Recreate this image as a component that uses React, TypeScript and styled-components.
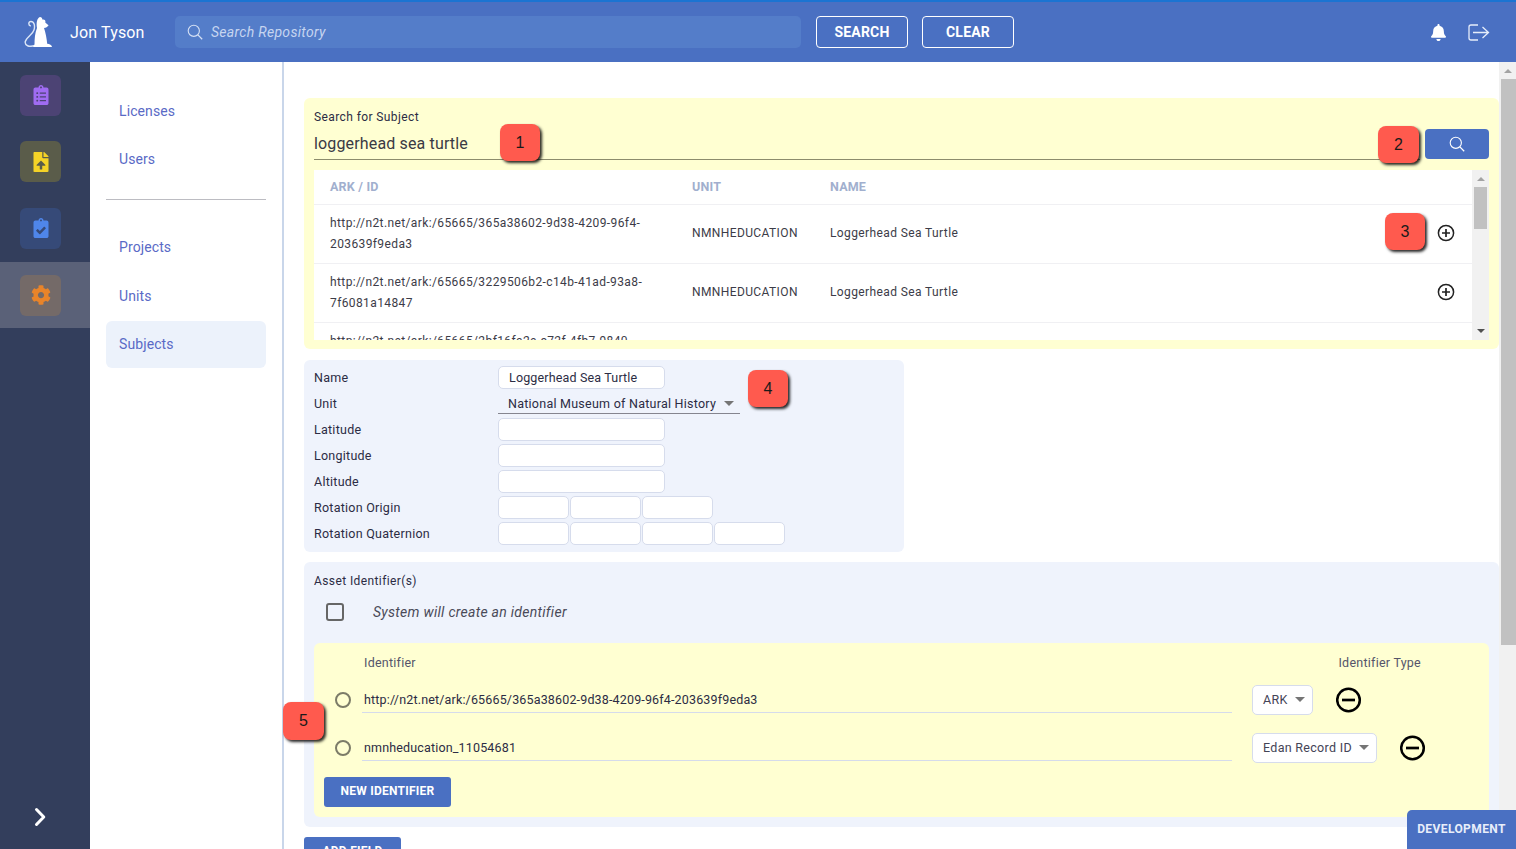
import React from 'react';
import styled, { createGlobalStyle } from 'styled-components';
import { FaClipboardList, FaFileUpload, FaClipboardCheck, FaCog, FaBell } from 'react-icons/fa';

const Global = createGlobalStyle`
  html, body { margin: 0; padding: 0; height: 100%; overflow: hidden; background: #fff; }
  * { box-sizing: border-box; }
  body { font-family: Roboto, "Liberation Sans", sans-serif; color: #2c2c44; }
`;

const Root = styled.div`position: relative; width: 1516px; height: 849px; overflow: hidden; display: flex; flex-direction: column;`;
const Header = styled.header`
  height: 62px; flex: none; display: flex; align-items: center; background: #4a70c2; border-top: 2px solid #1b74d2;
  padding: 0 26px 0 24px;
`;
const Logo = styled.svg`width: 28px; height: 30px; flex: none;`;
const UserName = styled.div`color: #fff; font-size: 16px; margin-left: 18px; width: 105px; letter-spacing: 0.15px;`;
const SearchBar = styled.div`
  width: 626px; height: 32px; background: #547dc9; border-radius: 5px; display: flex; align-items: center; padding-left: 12px; gap: 8px;
  color: #c6d5f0; font-size: 14px; font-style: italic; letter-spacing: 0.3px;
`;
const HeaderButton = styled.button<{ $w: number; $ml: number }>`
  width: ${p => p.$w}px; margin-left: ${p => p.$ml}px; height: 32px; background: transparent; border: 1px solid #fff; border-radius: 4px;
  color: #fff; font: 700 14px Roboto, sans-serif; padding: 0; letter-spacing: 0.2px;
`;
const HeaderIcons = styled.div`margin-left: auto; display: flex; align-items: center; gap: 21px;`;

const Body = styled.div`flex: 1; display: flex; min-height: 0;`;
const Sidebar = styled.aside`width: 90px; flex: none; background: #333e5c; display: flex; flex-direction: column;`;
const SideRow = styled.div<{ $active?: boolean }>`
  height: 66.5px; display: flex; align-items: center; padding-left: 20px; padding-top: ${p => (p.$active ? '1px' : '0')};
  background: ${p => (p.$active ? '#5a6178' : 'transparent')};
`;
const Tile = styled.div<{ $bg: string; $fg: string }>`
  width: 41px; height: 41px; border-radius: 6px; background: ${p => p.$bg}; color: ${p => p.$fg}; display: flex; align-items: center; justify-content: center; font-size: 20px;
`;
const Expand = styled.div`margin-top: auto; height: 64px; display: flex; align-items: flex-start; padding: 22px 0 0 34px;`;

const Nav = styled.nav`
  width: 194px; flex: none; border-right: 2px solid #c9d6ea; padding: 25px 16px 0; display: flex; flex-direction: column;
`;
const NavGroup = styled.div<{ $gap: number }>`display: flex; flex-direction: column; gap: ${p => p.$gap}px;`;
const NavItem = styled.div<{ $active?: boolean }>`
  height: 47px; display: flex; align-items: center; padding-left: 13px; padding-bottom: ${p => (p.$active ? '1px' : '0')}; border-radius: 6px; color: #5a6ac6; font-size: 14px; letter-spacing: 0.1px;
  background: ${p => (p.$active ? '#ecf2fb' : 'transparent')};
`;
const NavDivider = styled.hr`width: 100%; margin: 17px 0 23px; border: 0; border-top: 1px solid #bcbcc2;`;

const Main = styled.main`flex: 1; display: flex; min-width: 0;`;
const Scroll = styled.div`flex: 1; min-width: 0; overflow: hidden; padding: 36px 0 0 20px; display: flex; flex-direction: column; gap: 10px;`;

const Yellow = styled.section`background: #ffffd2; border-radius: 6px; flex: none;`;
const SearchPanel = styled(Yellow)`height: 251px; padding: 11px 10px 9px; margin-bottom: 1px; display: flex; flex-direction: column;`;
const SearchLabel = styled.div`font-size: 12px; line-height: 16px; letter-spacing: 0.4px;`;
const SearchLine = styled.div`display: flex; align-items: flex-end; gap: 5px; margin-top: 3px; height: 32px;`;
const SearchValue = styled.div`
  flex: 1; height: 32px; border-bottom: 1px solid #8c8c6c; font-size: 16px; line-height: 32px; letter-spacing: 0.15px; color: #3a3a44;
`;
const SearchGo = styled.button`width: 64px; height: 30px; margin-bottom: 1px; background: #4a70c2; border: 0; border-radius: 4px; display: flex; align-items: center; justify-content: center; padding: 0;`;

const TableBox = styled.div`margin-top: 10px; height: 170px; background: #fff; display: flex; overflow: hidden;`;
const TableInner = styled.div`flex: 1; min-width: 0; overflow: hidden;`;
const Row = styled.div<{ $h: number }>`
  display: grid; grid-template-columns: 362px 138px 1fr 100px; height: ${p => p.$h}px; border-bottom: 1px solid #f0f0f3; align-items: center;
  font-size: 12px; letter-spacing: 0.39px; color: #3c3c48;
`;
const HeadCell = styled.div`padding-left: 16px; margin-top: -2px; color: #a1afce; font-weight: 700; font-size: 12.5px; letter-spacing: 0.2px;`;
const Cell = styled.div`padding-left: 16px; line-height: 21px;`;
const MetaCell = styled(Cell)`margin-top: -2px;`;
const ActionCell = styled.div`display: flex; padding-left: 65px; margin-top: -2px;`;
const ClippedRow = styled.div`padding: 8px 16px 0; width: 362px; font-size: 12px; line-height: 21px; letter-spacing: 0.39px; color: #3c3c48;`;

const Track = styled.div`
  width: 17px; flex: none; background: #f1f1f1; display: flex; flex-direction: column; align-items: center; height: 100%;
`;
const Arrow = styled.div<{ $dir: 'up' | 'down'; $dark?: boolean; $mt?: string }>`
  width: 0; height: 0; flex: none; border-left: 4px solid transparent; border-right: 4px solid transparent;
  ${p => (p.$dir === 'up' ? `border-bottom: 4px solid ${p.$dark ? '#505050' : '#a3a3a3'};` : `border-top: 4px solid ${p.$dark ? '#505050' : '#a3a3a3'};`)}
  margin-top: ${p => p.$mt || '0'};
`;
const Thumb = styled.div<{ $h: number; $mt: number; $w: number; $ml?: number }>`
  width: ${p => p.$w}px; height: ${p => p.$h}px; margin-top: ${p => p.$mt}px; margin-left: ${p => p.$ml || 0}px; background: #c1c1c1; flex: none;
`;

const Pale = styled.section`background: #eff3fc; border-radius: 6px; flex: none;`;
const FormPanel = styled(Pale)`
  width: 600px; padding: 6px 10px 8px; display: grid; grid-template-columns: 184px 1fr; grid-auto-rows: 22px; row-gap: 4px; align-items: center;
  font-size: 12.5px; letter-spacing: 0.25px;
`;
const FieldRow = styled.div`display: flex; gap: 1px;`;
const Field = styled.div<{ $w: number }>`
  width: ${p => p.$w}px; height: 23px; background: #fff; border: 1px solid #d6dcec; border-radius: 5px; padding-left: 10px; line-height: 21px; font-size: 12.5px; letter-spacing: 0.16px; color: #2c2c44;
`;
const UnitSelect = styled.div`
  width: 242px; height: 20px; margin-top: 2px; border-bottom: 1px solid #85858f; display: flex; align-items: center; justify-content: space-between; padding: 0 6px 0 10px;
`;
const Caret = styled.span`width: 0; height: 0; flex: none; border-left: 5px solid transparent; border-right: 5px solid transparent; border-top: 5px solid #757575;`;

const AssetPanel = styled(Pale)`height: 265px; padding: 11px 10px 10px; display: flex; flex-direction: column;`;
const AssetLabel = styled.div`font-size: 12px; line-height: 16px; letter-spacing: 0.4px;`;
const CheckRow = styled.div`display: flex; align-items: center; margin: 14px 0 0 12px; height: 18px; font-size: 14px; font-style: italic; color: #4a4a58; letter-spacing: 0.28px;`;
const CheckBox = styled.span`width: 18px; height: 18px; border: 2px solid #666; border-radius: 3px; margin-right: 29px; flex: none;`;
const IdBox = styled(Yellow)`margin-top: 22px; height: 174px; padding: 0 10px; display: flex; flex-direction: column;`;
const IdHead = styled.div`
  display: flex; justify-content: space-between; height: 38px; margin-bottom: 3px; align-items: center; padding: 0 58px 0 40px; font-size: 12.5px; letter-spacing: 0.25px; color: #55556a;
`;
const IdRow = styled.div`display: flex; align-items: center; height: 32px; margin-bottom: 16px; font-size: 12.5px; letter-spacing: 0.3px;`;
const Radio = styled.span`width: 16px; height: 16px; border: 2px solid #7c7c68; border-radius: 50%; margin: 0 11px 0 11px; flex: none;`;
const IdInput = styled.div`
  width: 870px; height: 28px; margin-top: -3px; border-bottom: 1px solid #d5dbeb; padding-left: 2px; line-height: 30px; letter-spacing: 0.16px; color: #2c2c44; flex: none; white-space: nowrap;
`;
const TypeSelect = styled.div<{ $w: number }>`
  width: ${p => p.$w}px; height: 30px; margin-left: 20px; background: #fff; border: 1px solid #d6dcec; border-radius: 5px; display: flex; align-items: center; justify-content: space-between; padding: 0 7px 2px 10px; flex: none; color: #444456;
`;
const MinusWrap = styled.span`margin-left: 23px; display: flex; flex: none;`;
const PrimaryButton = styled.button<{ $w: number }>`
  width: ${p => p.$w}px; height: 30px; background: #4a70c2; border: 0; border-radius: 3px; color: #fff; font: 700 12px Roboto, sans-serif; padding: 0 0 2px; flex: none; letter-spacing: 0.25px;
`;
const NewIdButton = styled(PrimaryButton)`margin-top: -3px;`;

const Badge = styled.div<{ $x: number; $y: number; $w?: number; $h?: number }>`
  position: absolute; left: ${p => p.$x}px; top: ${p => p.$y}px; width: ${p => p.$w || 40}px; height: ${p => p.$h || 37}px; border-radius: 8px; background: #ff5a4e; color: #1a1a1a;
  box-shadow: 2px 2px 3px rgba(0,0,0,.85); font: 16px "Liberation Sans", sans-serif; display: flex; align-items: center; justify-content: center;
`;
const DevTag = styled.div`
  position: absolute; right: 0; bottom: 0; width: 109px; height: 39px; padding-bottom: 2px; background: #4a70c2; border-top-left-radius: 5px; color: #e8eefa; font-weight: 700; font-size: 12px; letter-spacing: 0.4px;
  display: flex; align-items: center; justify-content: center;
`;

const SearchGlyph = ({ size = 16, color = '#fff' }: { size?: number; color?: string }) => (
  <svg width={size} height={size} viewBox="0 0 16 16" fill="none" stroke={color} strokeWidth="1.1">
    <circle cx="6.8" cy="6.8" r="5.6" />
    <path d="M10.900 10.900 15.200 15.200" strokeWidth="1.3" />
  </svg>
);
const PlusCircle = () => (
  <svg width="18" height="18" viewBox="0 0 18 18" fill="none" stroke="#222" strokeWidth="1.5">
    <circle cx="9" cy="9" r="7.600" />
    <path d="M9 5v8M5 9h8" strokeWidth="1.700" />
  </svg>
);
const MinusCircle = () => (
  <svg width="26" height="26" viewBox="0 0 26 26" fill="none" stroke="#000" strokeWidth="2.5">
    <circle cx="12.500" cy="13" r="11.300" />
    <path d="M6 13h13" strokeWidth="2.700" />
  </svg>
);

const rows = [
  'http://n2t.net/ark:/65665/365a38602-9d38-4209-96f4-203639f9eda3',
  'http://n2t.net/ark:/65665/3229506b2-c14b-41ad-93a8-7f6081a14847',
];

export default function App() {
  return (
    <Root>
      <Global />
      <Header>
        <Logo viewBox="0 0 28 30" fill="none">
          <path d="M11 28.500C5 30.500 0.500 28.500 1.300 24.500 2.300 20 8.500 18 10 13 11.300 8.500 10 4.500 7 4.500 4.300 4.500 4 8.500 6.800 9" stroke="#dbe6f7" strokeWidth="1.400" />
          <path d="M16 0c1.500 0 2.300 1 2.300 2.500 2-.5 3.700.7 3 3 1 1 2.500 2 3.300 2.800-1 1.700-2.700 2.500-4.600 2.700 1.500 4.500 2.800 10.500 3.200 15.800 2.300.2 4.800 1.300 4.800 3.200H9l1.500-2.500c0-6 .5-12 2.500-16.500C12 6 13 1 16 0Z" fill="#fff" />
        </Logo>
        <UserName>Jon Tyson</UserName>
        <SearchBar>
          <SearchGlyph color="#d5e0f4" />
          Search Repository
        </SearchBar>
        <HeaderButton $w={92} $ml={15}>SEARCH</HeaderButton>
        <HeaderButton $w={92} $ml={14}>CLEAR</HeaderButton>
        <HeaderIcons>
          <FaBell color="#fff" size={17} />
          <svg width="22" height="19" viewBox="0 0 22 19" fill="none" stroke="#e6edfa" strokeWidth="1.3">
            <path d="M10 2H3a2 2 0 0 0-2 2v11a2 2 0 0 0 2 2h7" />
            <path d="M5 9.500h15M14.500 4l6 5.500-6 5.500" />
          </svg>
        </HeaderIcons>
      </Header>
      <Body>
        <Sidebar>
          <SideRow><Tile $bg="#4c4374" $fg="#a06cf2"><FaClipboardList /></Tile></SideRow>
          <SideRow><Tile $bg="#5a5c4a" $fg="#f5d327"><FaFileUpload /></Tile></SideRow>
          <SideRow><Tile $bg="#364a78" $fg="#4f86ea"><FaClipboardCheck /></Tile></SideRow>
          <SideRow $active><Tile $bg="#746a68" $fg="#e8842a"><FaCog /></Tile></SideRow>
          <Expand>
            <svg width="12" height="20" viewBox="0 0 12 20" fill="none" stroke="#fff" strokeWidth="3" strokeLinecap="round" strokeLinejoin="round">
              <path d="M2.500 2.500 9.800 10 2.500 17.500" />
            </svg>
          </Expand>
        </Sidebar>
        <Nav>
          <NavGroup $gap={1}>
            <NavItem>Licenses</NavItem>
            <NavItem>Users</NavItem>
          </NavGroup>
          <NavDivider />
          <NavGroup $gap={2}>
            <NavItem>Projects</NavItem>
            <NavItem>Units</NavItem>
            <NavItem $active>Subjects</NavItem>
          </NavGroup>
        </Nav>
        <Main>
          <Scroll>
            <SearchPanel>
              <SearchLabel>Search for Subject</SearchLabel>
              <SearchLine>
                <SearchValue>loggerhead sea turtle</SearchValue>
                <SearchGo><SearchGlyph /></SearchGo>
              </SearchLine>
              <TableBox>
                <TableInner>
                  <Row $h={35}>
                    <HeadCell>ARK / ID</HeadCell>
                    <HeadCell>UNIT</HeadCell>
                    <HeadCell>NAME</HeadCell>
                    <span />
                  </Row>
                  {rows.map(r => (
                    <Row $h={59} key={r}>
                      <Cell>{r}</Cell>
                      <MetaCell>NMNHEDUCATION</MetaCell>
                      <MetaCell>Loggerhead Sea Turtle</MetaCell>
                      <ActionCell><PlusCircle /></ActionCell>
                    </Row>
                  ))}
                  <ClippedRow>http://n2t.net/ark:/65665/2bf16fa2e-c72f-4fb7-9840-</ClippedRow>
                </TableInner>
                <Track>
                  <Arrow $dir="up" $mt="7px" />
                  <Thumb $w={13} $h={42} $mt={6} />
                  <Arrow $dir="down" $dark $mt="100px" />
                </Track>
              </TableBox>
            </SearchPanel>
            <FormPanel>
              <span>Name</span><Field $w={167}>Loggerhead Sea Turtle</Field>
              <span>Unit</span>
              <UnitSelect>National Museum of Natural History<Caret /></UnitSelect>
              <span>Latitude</span><Field $w={167} />
              <span>Longitude</span><Field $w={167} />
              <span>Altitude</span><Field $w={167} />
              <span>Rotation Origin</span>
              <FieldRow><Field $w={71} /><Field $w={71} /><Field $w={71} /></FieldRow>
              <span>Rotation Quaternion</span>
              <FieldRow><Field $w={71} /><Field $w={71} /><Field $w={71} /><Field $w={71} /></FieldRow>
            </FormPanel>
            <AssetPanel>
              <AssetLabel>Asset Identifier(s)</AssetLabel>
              <CheckRow><CheckBox />System will create an identifier</CheckRow>
              <IdBox>
                <IdHead><span>Identifier</span><span>Identifier Type</span></IdHead>
                <IdRow>
                  <Radio />
                  <IdInput>http://n2t.net/ark:/65665/365a38602-9d38-4209-96f4-203639f9eda3</IdInput>
                  <TypeSelect $w={61}>ARK<Caret /></TypeSelect>
                  <MinusWrap><MinusCircle /></MinusWrap>
                </IdRow>
                <IdRow>
                  <Radio />
                  <IdInput>nmnheducation_11054681</IdInput>
                  <TypeSelect $w={125}>Edan Record ID<Caret /></TypeSelect>
                  <MinusWrap><MinusCircle /></MinusWrap>
                </IdRow>
                <NewIdButton $w={127}>NEW IDENTIFIER</NewIdButton>
              </IdBox>
            </AssetPanel>
            <PrimaryButton $w={97}>ADD FIELD</PrimaryButton>
          </Scroll>
          <Track>
            <Arrow $dir="up" $mt="7px" />
            <Thumb $w={15} $ml={2} $h={566} $mt={6} />
          </Track>
        </Main>
      </Body>
      <Badge $x={500} $y={124}>1</Badge>
      <Badge $x={1378} $y={126} $w={41}>2</Badge>
      <Badge $x={1385} $y={213}>3</Badge>
      <Badge $x={748} $y={370}>4</Badge>
      <Badge $x={283} $y={702} $w={41} $h={38}>5</Badge>
      <DevTag>DEVELOPMENT</DevTag>
    </Root>
  );
}
